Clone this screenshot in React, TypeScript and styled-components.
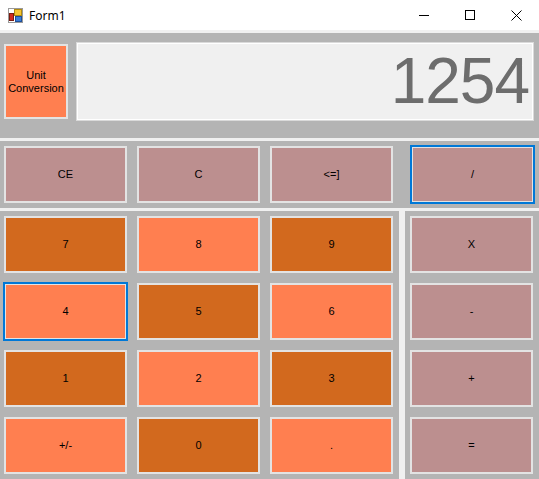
import React from "react";
import styled, { createGlobalStyle, css } from "styled-components";

const GlobalStyle = createGlobalStyle`
  html, body { margin: 0; padding: 0; background: #b4b4b4; }
  * { box-sizing: border-box; }
`;

const Window = styled.div`
  width: 539px;
  height: 479px;
  display: flex;
  flex-direction: column;
  background: #b4b4b4;
  overflow: hidden;
  font-family: "Liberation Sans", Arial, sans-serif;
`;

const TitleBar = styled.div`
  height: 30px;
  flex: none;
  background: #ffffff;
  display: flex;
  align-items: center;
`;

const AppIcon = styled.svg`
  margin-left: 8px;
  width: 15px;
  height: 15px;
  flex: none;
`;

const Title = styled.span`
  margin-left: 6px;
  font-family: "Noto Sans", "Open Sans", sans-serif;
  font-size: 12px;
  color: #000;
  flex: 1;
`;

const CaptionButton = styled.div`
  width: 46px;
  height: 30px;
  display: flex;
  align-items: center;
  justify-content: center;
`;

const HLine = styled.div<{ $h: number }>`
  height: ${(p) => p.$h}px;
  flex: none;
  background: #f0f0f0;
`;

const Header = styled.div`
  height: 105px;
  flex: none;
  display: flex;
  align-items: center;
  gap: 8px;
  padding: 0 5px 8px 4px;
`;

const Display = styled.div`
  flex: 1;
  height: 79px;
  background: #f0f0f0;
  border: 1px solid #dadada;
  box-shadow: inset 0 0 0 1px #ffffff;
  text-align: right;
  padding: 2px 4px 0 0;
  font-family: "Liberation Sans", Arial, sans-serif;
  font-size: 64px;
  letter-spacing: -1px;
  line-height: 72px;
  color: #6d6d6d;
`;

const faces = {
  light: "#ff7f50",
  dark: "#d2691e",
  rose: "#bc8f8f",
} as const;

type Face = keyof typeof faces;

const Key = styled.div<{ $face: Face; $focused?: boolean }>`
  background: ${(p) => faces[p.$face]};
  border: 2px solid #e3e3e3;
  display: flex;
  align-items: center;
  justify-content: center;
  text-align: center;
  font-family: "Liberation Sans", Arial, sans-serif;
  font-size: 11px;
  line-height: 13px;
  color: #000;
  ${(p) =>
    p.$focused &&
    css`
      outline: 2px solid #0078d7;
      outline-offset: -1px;
    `}
`;

const UnitKey = styled(Key)`
  width: 64px;
  height: 75px;
  flex: none;
`;

const RowKey = styled(Key)`
  width: 123px;
  height: 57px;
  flex: none;
`;

const OpRow = styled.div`
  height: 67px;
  flex: none;
  display: flex;
  align-items: flex-start;
  gap: 10px;
  padding: 5px 0 0 4px;
  & > :last-child {
    margin-left: 8px;
  }
`;

const Bottom = styled.div`
  flex: 1;
  display: flex;
`;

const NumPad = styled.div`
  width: 399px;
  flex: none;
  display: grid;
  grid-template-columns: repeat(3, 123px);
  grid-template-rows: repeat(4, 57px);
  gap: 10px;
  padding: 5px 0 0 4px;
`;

const VLine = styled.div`
  width: 6px;
  flex: none;
  background: #f0f0f0;
`;

const OpPad = styled.div`
  flex: 1;
  display: grid;
  grid-template-columns: 123px;
  grid-template-rows: repeat(4, 57px);
  gap: 10px;
  padding: 5px 0 0 5px;
`;

const numbers: { label: string; face: Face; focused?: boolean }[] = [
  { label: "7", face: "dark" },
  { label: "8", face: "light" },
  { label: "9", face: "dark" },
  { label: "4", face: "light", focused: true },
  { label: "5", face: "dark" },
  { label: "6", face: "light" },
  { label: "1", face: "dark" },
  { label: "2", face: "light" },
  { label: "3", face: "dark" },
  { label: "+/-", face: "light" },
  { label: "0", face: "dark" },
  { label: ".", face: "light" },
];

export default function App() {
  return (
    <>
      <GlobalStyle />
      <Window>
        <TitleBar>
          <AppIcon viewBox="0 0 15 15">
            <rect x="0.5" y="0.5" width="14" height="14" fill="#ffffff" stroke="#9a9a9a" />
            <rect x="1.5" y="5.5" width="4" height="7" fill="#d42a1e" stroke="#7a1a10" />
            <rect x="6.5" y="1.5" width="7" height="6" fill="#f7c531" stroke="#b08a10" />
            <rect x="7.5" y="8.5" width="6" height="5" fill="#3d7fd6" stroke="#1e4f9a" />
          </AppIcon>
          <Title>Form1</Title>
          <CaptionButton>
            <svg width="10" height="10" viewBox="0 0 10 10">
              <line x1="0" y1="5.5" x2="10" y2="5.5" stroke="#000" strokeWidth="1" />
            </svg>
          </CaptionButton>
          <CaptionButton>
            <svg width="10" height="10" viewBox="0 0 10 10">
              <rect x="0.5" y="0.5" width="9" height="9" fill="none" stroke="#000" strokeWidth="1" />
            </svg>
          </CaptionButton>
          <CaptionButton>
            <svg width="11" height="11" viewBox="0 0 11 11">
              <path d="M0.5 0.5 L10.5 10.5 M10.5 0.5 L0.5 10.5" stroke="#000" strokeWidth="1" fill="none" />
            </svg>
          </CaptionButton>
        </TitleBar>
        <HLine $h={3} />
        <Header>
          <UnitKey $face="light">
            Unit
            <br />
            Conversion
          </UnitKey>
          <Display>1254</Display>
        </Header>
        <HLine $h={3} />
        <OpRow>
          <RowKey $face="rose">CE</RowKey>
          <RowKey $face="rose">C</RowKey>
          <RowKey $face="rose">{"<=]"}</RowKey>
          <RowKey $face="rose" $focused>
            /
          </RowKey>
        </OpRow>
        <HLine $h={3} />
        <Bottom>
          <NumPad>
            {numbers.map((n) => (
              <Key key={n.label} $face={n.face} $focused={n.focused}>
                {n.label}
              </Key>
            ))}
          </NumPad>
          <VLine />
          <OpPad>
            <Key $face="rose">X</Key>
            <Key $face="rose">-</Key>
            <Key $face="rose">+</Key>
            <Key $face="rose">=</Key>
          </OpPad>
        </Bottom>
      </Window>
    </>
  );
}
